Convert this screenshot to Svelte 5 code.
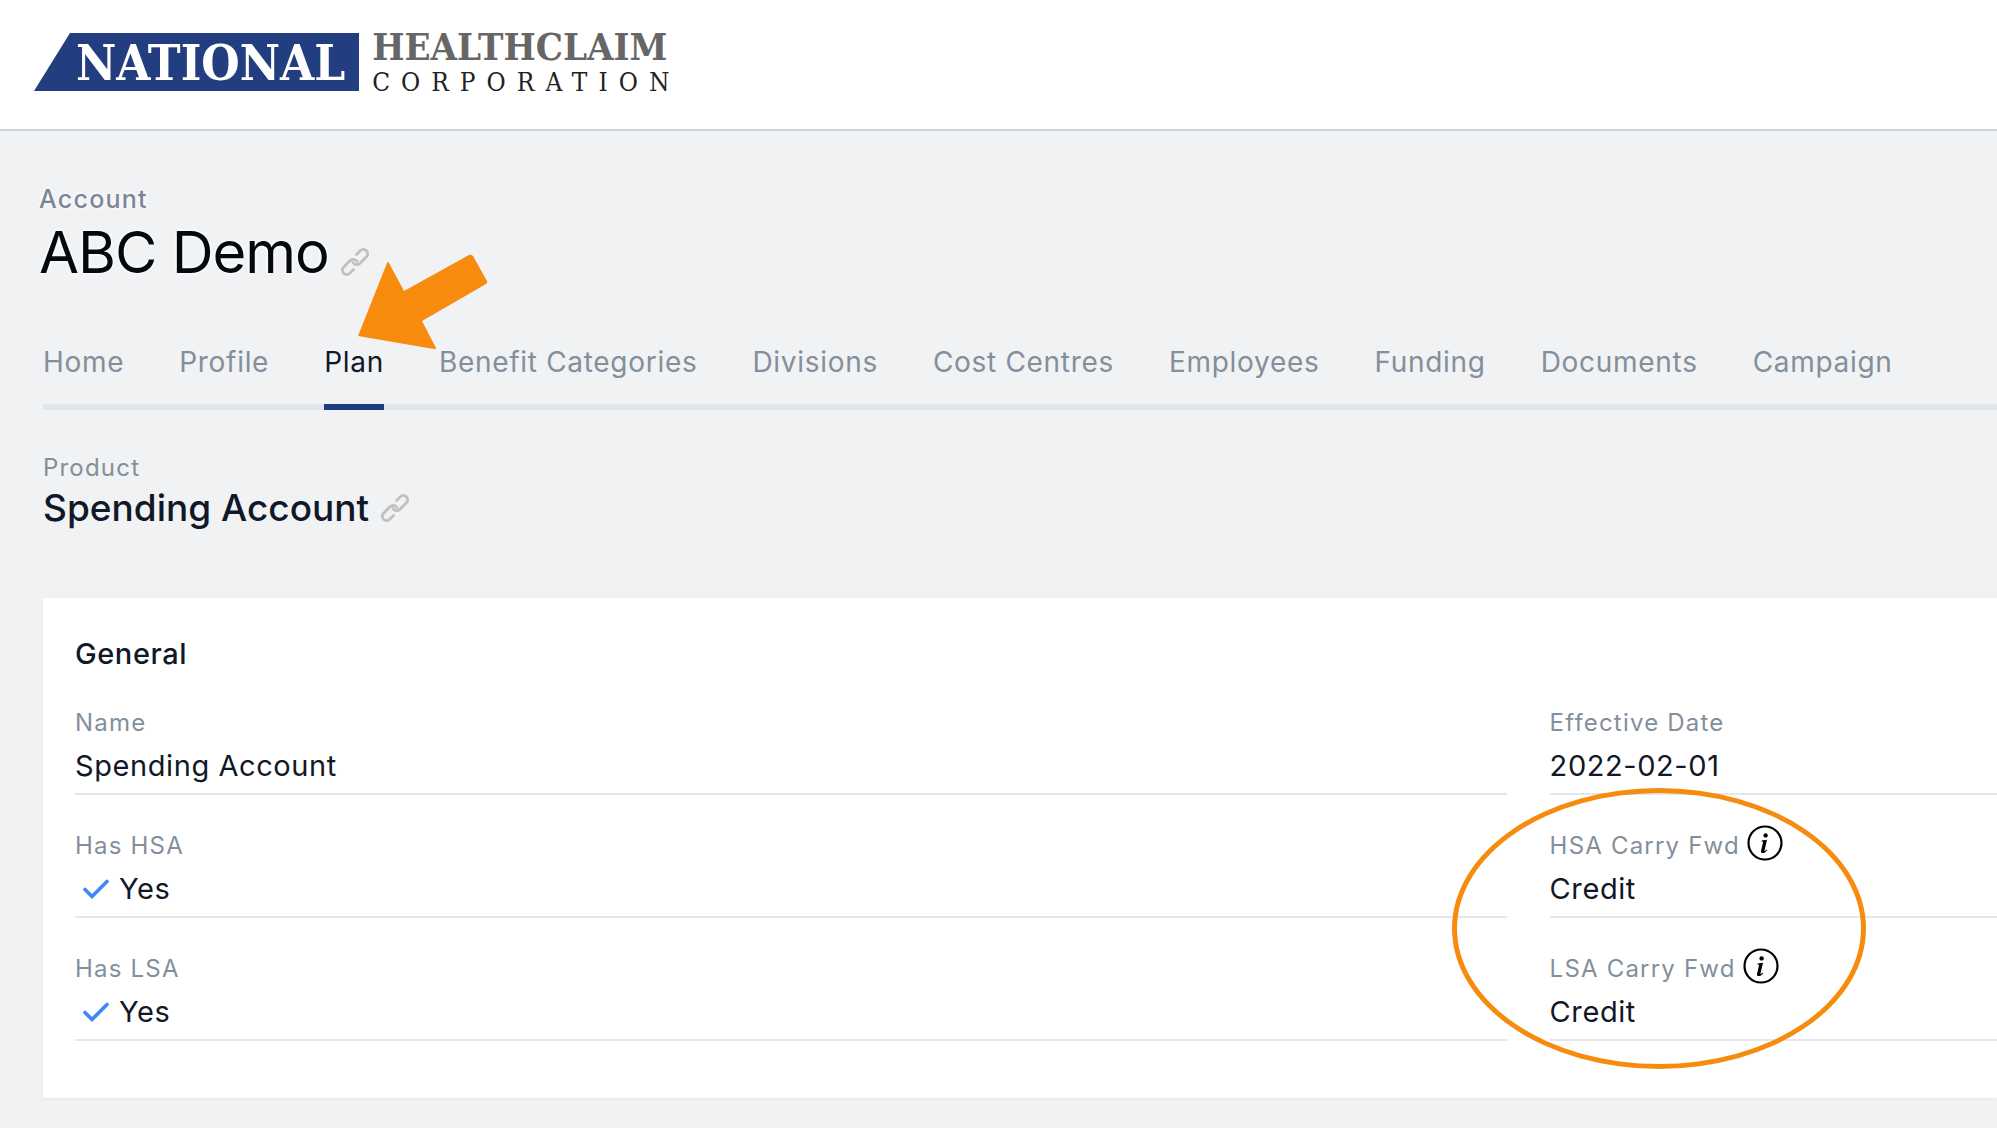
<script>
  const tabs = [
    'Home', 'Profile', 'Plan', 'Benefit Categories', 'Divisions', 'Cost Centres',
    'Employees', 'Funding', 'Documents', 'Campaign'
  ];
  const current = 'Plan';
  const rows = [
    [{ label: 'Name', value: 'Spending Account' }, { label: 'Effective Date', value: '2022-02-01' }],
    [{ label: 'Has HSA', value: 'Yes', check: true }, { label: 'HSA Carry Fwd', value: 'Credit', info: true }],
    [{ label: 'Has LSA', value: 'Yes', check: true }, { label: 'LSA Carry Fwd', value: 'Credit', info: true }]
  ];
</script>

{#snippet linkIcon()}
  <svg viewBox="0 0 30 30" fill="none" stroke="currentColor" stroke-width="2.8" stroke-linecap="round">
    <path d="M16.5 7.5l3.8-3.8a4.3 4.3 0 0 1 6.1 6.1l-6.6 6.6a4.3 4.3 0 0 1-6.1 0l-.7-.9" />
    <path d="M13.5 22.5l-3.8 3.8a4.3 4.3 0 0 1-6.1-6.1l6.6-6.6a4.3 4.3 0 0 1 6.1 0l.7.9" />
  </svg>
{/snippet}

<header class="topbar">
  <a class="logo" href="#home" aria-label="National Healthclaim Corporation">
    <span class="flag">NATIONAL</span>
    <span class="words">
      <span class="health">HEALTHCLAIM</span>
      <span class="corp">CORPORATION</span>
    </span>
  </a>
</header>

<main>
  <section class="account">
    <p class="eyebrow">Account</p>
    <div class="title">
      <h1>ABC Demo</h1>
      <a class="link" href="#account" aria-label="Link to account">{@render linkIcon()}</a>
    </div>
  </section>

  <nav>
    {#each tabs as tab}
      <a href="#{tab}" class:active={tab === current} aria-current={tab === current ? 'page' : undefined}>{tab}</a>
    {/each}
  </nav>

  <section class="product">
    <p class="label">Product</p>
    <div class="title">
      <h2>Spending Account</h2>
      <a class="link" href="#product" aria-label="Link to product">{@render linkIcon()}</a>
    </div>
  </section>

  <section class="card">
    <h3>General</h3>
    <dl>
      {#each rows as row}
        {#each row as field}
          <div class="field">
            <dt class="label">
              {field.label}
              {#if field.info}
                <button type="button" aria-label="About {field.label}">
                  <svg viewBox="0 0 36 36">
                    <circle cx="18" cy="18" r="16.5" fill="none" stroke="#000" stroke-width="2.2" />
                    <circle cx="18.6" cy="10.4" r="2.2" />
                    <path d="M14.6 15.6l5.4-.8-2.5 10.6c-.2.9.5.8 2.2-.9l.6.5c-1.6 2.3-3.2 3.1-4.6 3.1-1.6 0-2-1.1-1.6-2.6l1.9-8c.2-.9-.1-1.1-1.5-1.1z" />
                  </svg>
                </button>
              {/if}
            </dt>
            <dd>
              {#if field.check}
                <svg class="check" viewBox="0 0 28 22" fill="none"><path d="M3 11.5l7 7L25 3.5" stroke="#4285f4" stroke-width="3.6" stroke-linecap="round" /></svg>
              {/if}
              {field.value}
            </dd>
          </div>
        {/each}
      {/each}
    </dl>
    <div class="ring"></div>
  </section>

  <svg class="arrow" viewBox="0 0 132 97"><path d="M2 83L31 10Q32 8 33 10L48 38L113 2Q115 1 117 3L131 28Q132 30 130 31L66 68L80 95Q80 97 78 96Z" fill="#f68b0d" /></svg>
</main>

<style>
  :global(body) {
    background: #f0f2f4;
    color: #111827;
    font-family: Inter, 'Liberation Sans', sans-serif;
    overflow: hidden;
  }
  h1, h2, h3, p, dl, dd { margin: 0; }
  a { color: inherit; text-decoration: none; }
  svg { display: block; }

  .topbar {
    background: #fff;
    border-bottom: 2px solid #cbd5dc;
    padding: 33px 34px 38px;
  }
  .logo { display: flex; gap: 13px; font-family: 'DejaVu Serif Condensed', 'DejaVu Serif', serif; white-space: nowrap; }
  .flag {
    box-sizing: border-box;
    background: #223e80;
    clip-path: polygon(36px 0, 100% 0, 100% 100%, 0 100%);
    color: #fff;
    font-size: 49px;
    font-weight: 700;
    line-height: 60px;
    height: 58px;
    padding: 0 14px 0 42px;
  }
  .words { display: flex; flex-direction: column; gap: 8px; height: 58px; }
  .health { color: #666; font-size: 38px; font-weight: 700; line-height: 28px; }
  .corp { color: #222; font-size: 26px; line-height: 26px; letter-spacing: 11px; }

  main { position: relative; padding: 53px 0 30px 43px; }
  .account { margin-left: -4px; text-shadow: 0 0 3px #fff, 0 0 4px #fff; }
  .eyebrow { color: #7b8794; font-size: 25px; font-weight: 500; line-height: 30px; letter-spacing: 0.05em; }
  .title { display: flex; align-items: center; gap: 11px; }
  .link { color: #c0c0c0; }
  .link svg { width: 30px; height: 30px; }
  h1 { color: #05080f; font-size: 58px; font-weight: 400; line-height: 76px; letter-spacing: -1px; }
  .account .link { margin-top: 20px; }

  nav {
    display: flex;
    gap: 55px;
    margin-top: 55px;
    box-shadow: inset 0 -6px #e2e5eb;
    white-space: nowrap;
  }
  nav a { color: #838f9b; font-size: 28px; line-height: 34px; letter-spacing: 0.025em; padding-bottom: 25px; border-bottom: 6px solid transparent; }
  nav a.active { color: #111827; border-color: #203c80; }

  .label { color: #838f9b; font-size: 24px; line-height: 30px; letter-spacing: 0.05em; }
  .product { margin-top: 43px; }
  h2 { font-size: 37px; font-weight: 500; line-height: 50px; }

  .card {
    position: relative;
    background: #fff;
    margin-top: 65px;
    padding: 38px 0 57px 32px;
    box-shadow: 0 1px 4px rgb(0 0 0 / 5%);
  }
  h3 { font-size: 29px; font-weight: 500; line-height: 36px; margin-bottom: 36px; letter-spacing: 0.02em; }
  dl { display: grid; grid-template-columns: 16fr 5fr; column-gap: 43px; row-gap: 36px; }
  .field { border-bottom: 2px solid #e5e6e8; }
  dt { display: flex; align-items: center; gap: 7px; }
  dt button { border: 0; background: none; padding: 0; margin: -12px 0 -6px; }
  dt button svg { width: 36px; height: 36px; }
  dd { display: flex; align-items: center; gap: 9px; font-size: 29px; line-height: 40px; padding: 8px 0 7px; letter-spacing: 0.02em; }
  .check { width: 28px; height: 22px; margin-left: 7px; }

  /* Annotations laid over the page */
  .ring {
    position: absolute;
    left: 1409px;
    top: 190px;
    width: 404px;
    height: 271px;
    border: 5px solid #f68b0d;
    border-radius: 50%;
    pointer-events: none;
  }
  .arrow { position: absolute; left: 356px; top: 122px; width: 132px; height: 97px; pointer-events: none; }
</style>
